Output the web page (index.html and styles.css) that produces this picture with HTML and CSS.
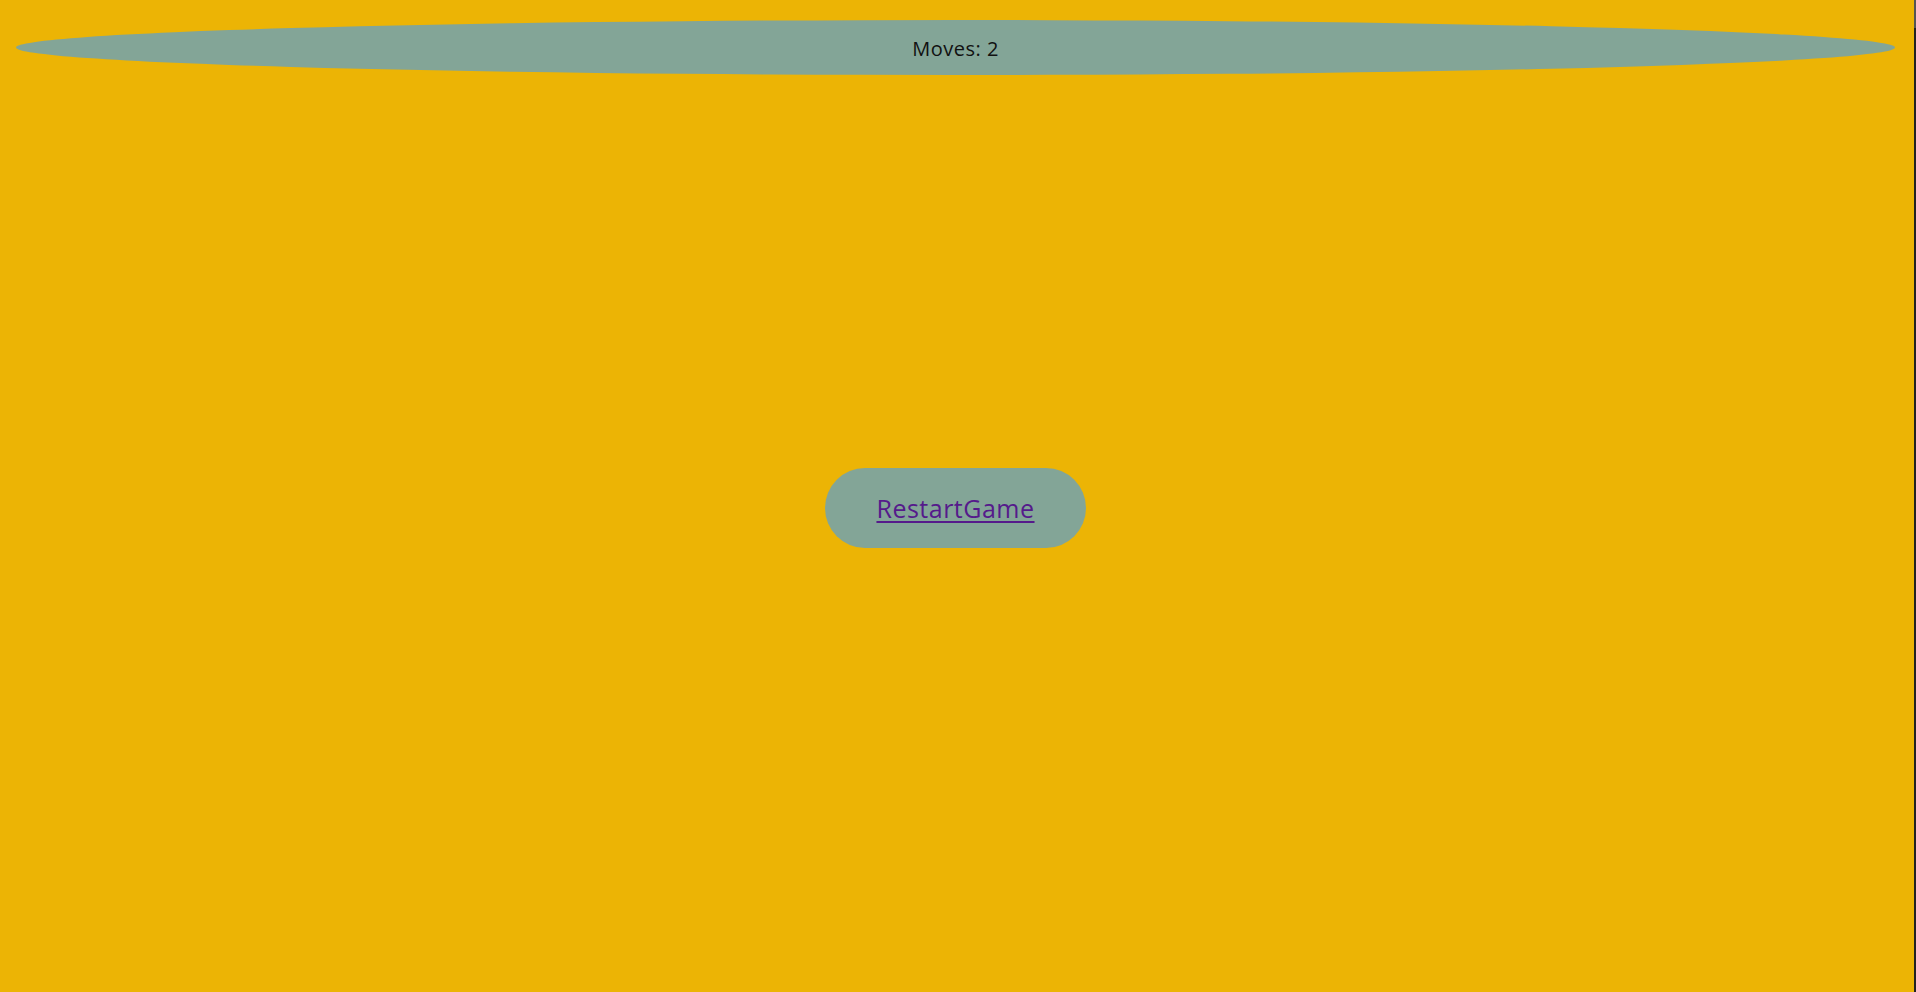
FILE: index.html
```html
<!DOCTYPE html>
<html lang="en">
<head>
<meta charset="utf-8">
<title>Game</title>
<link rel="stylesheet" href="styles.css">
</head>
<body>
<div class="page">
  <main class="main">
    <header class="moves">Moves: 2</header>
    <div class="center">
      <a class="restart" href="#">RestartGame</a>
    </div>
  </main>
  <div class="rail"><div class="thumb"></div></div>
</div>
</body>
</html>
```
FILE: styles.css
```css
html, body {
  margin: 0;
  padding: 0;
  height: 100%;
}
body {
  background: #222222;
  font-family: "Open Sans", "Liberation Sans", sans-serif;
}
.page {
  display: flex;
  height: 992px;
}
.main {
  flex: 1;
  background: #ecb405;
  display: flex;
  flex-direction: column;
}
.moves {
  margin: 20px 19px 0 16px;
  height: 55px;
  border-radius: 50%;
  background: #83a597;
  display: flex;
  align-items: center;
  justify-content: center;
  font-size: 20px;
  letter-spacing: 0.5px;
  color: #111;
  padding-top: 1px;
  box-sizing: border-box;
}
.center {
  display: flex;
  justify-content: center;
  margin-top: 393px;
  padding-right: 3px;
}
.restart {
  width: 261px;
  height: 80px;
  border-radius: 40px;
  background: #83a597;
  display: flex;
  align-items: center;
  justify-content: center;
  color: #551a8b;
  font-size: 25px;
  letter-spacing: 0.5px;
  text-decoration: underline;
  text-underline-offset: 3px;
}
.rail {
  width: 2px;
  background: #222222;
}
.thumb {
  height: 28px;
  background: #555555;
}
```
